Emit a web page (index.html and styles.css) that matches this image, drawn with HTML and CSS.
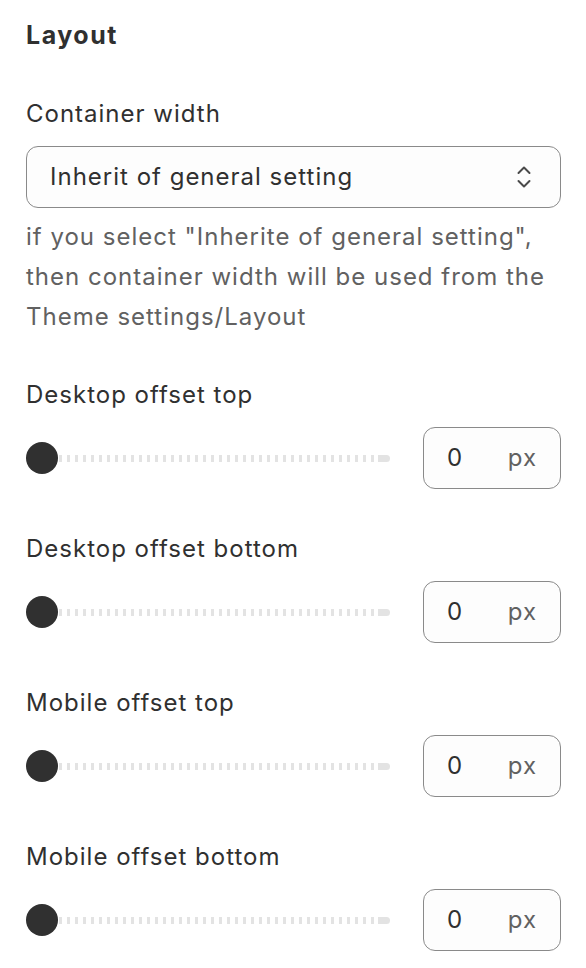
FILE: index.html
```html
<!DOCTYPE html>
<html lang="en">
<head>
    <meta charset="UTF-8">
    <meta name="viewport" content="width=device-width, initial-scale=1.0">
    <title>Layout</title>
    <link rel="stylesheet" href="styles.css">
</head>
<body>

<div class="panel">
    <h2 class="panelTitle">Layout</h2>

    <div class="field firstField">
        <label class="fieldLabel">Container width</label>
        <div class="select">
            <span>Inherit of general setting</span>
            <svg class="selectArrows" width="20" height="28" viewBox="0 0 20 28">
                <path d="M4.5 10 L10 4.5 L15.5 10" />
                <path d="M4.5 18 L10 23.5 L15.5 18" />
            </svg>
        </div>
        <p class="helpText">if you select "Inherite of general setting", then container width will be used from the Theme settings/Layout</p>
    </div>

    <div class="field afterHelp">
        <label class="fieldLabel">Desktop offset top</label>
        <div class="rangeRow">
            <div class="range">
                <span class="thumb"></span>
                <span class="track"></span>
                <span class="trackEnd"></span>
            </div>
            <div class="numberBox"><span>0</span><span class="unit">px</span></div>
        </div>
    </div>

    <div class="field">
        <label class="fieldLabel">Desktop offset bottom</label>
        <div class="rangeRow">
            <div class="range">
                <span class="thumb"></span>
                <span class="track"></span>
                <span class="trackEnd"></span>
            </div>
            <div class="numberBox"><span>0</span><span class="unit">px</span></div>
        </div>
    </div>

    <div class="field">
        <label class="fieldLabel">Mobile offset top</label>
        <div class="rangeRow">
            <div class="range">
                <span class="thumb"></span>
                <span class="track"></span>
                <span class="trackEnd"></span>
            </div>
            <div class="numberBox"><span>0</span><span class="unit">px</span></div>
        </div>
    </div>

    <div class="field">
        <label class="fieldLabel">Mobile offset bottom</label>
        <div class="rangeRow">
            <div class="range">
                <span class="thumb"></span>
                <span class="track"></span>
                <span class="trackEnd"></span>
            </div>
            <div class="numberBox"><span>0</span><span class="unit">px</span></div>
        </div>
    </div>
</div>

</body>
</html>
```

FILE: styles.css
```css
body {
    margin: 0;
    background-color: #fff;
    color: #303030;
    font-family: Inter, "Noto Sans", sans-serif;
    font-size: 24px;
    line-height: 40px;
    letter-spacing: 1px; /* текст в макете шире обычного Inter */
}
.panel {
    padding: 15px 25px 0 26px;
}
.panelTitle {
    margin: 0;
    font-size: 25px;
    font-weight: 700;
    line-height: 40px;
    letter-spacing: 1.5px;
}
.field {
    display: flex;
    flex-direction: column;
    margin-top: 40px;
}
.firstField {
    margin-top: 39px;
}
.afterHelp {
    margin-top: 38px;
}
.fieldLabel {
    display: block;
    margin-bottom: 12px;
}
.select {
    display: flex;
    align-items: center;
    justify-content: space-between;
    height: 62px;
    box-sizing: border-box;
    padding: 0 26px 0 23px;
    border: 1px solid #8a8a8a;
    border-radius: 12px;
    background-color: #fdfdfd;
}
.selectArrows path {
    fill: none;
    stroke: #4a4a4a; /* стрелки селекта */
    stroke-width: 2;
    stroke-linecap: round;
    stroke-linejoin: round;
}
.helpText {
    margin: 9px 0 0;
    color: #616161;
}
.rangeRow {
    display: flex;
    align-items: center;
    justify-content: space-between;
}
.range {
    display: flex;
    align-items: center;
    width: 364px;
    height: 62px;
}
.thumb {
    flex: none;
    width: 32px;
    height: 32px;
    border-radius: 50%;
    background-color: #303030;
}
.track {
    flex: 1;
    height: 7px;
    margin-left: 1px;
    background: repeating-linear-gradient(90deg, #e3e3e3 0 3.3px, transparent 3.3px 8px);
}
.trackEnd {
    flex: none;
    width: 12px;
    height: 7px;
    margin-left: 1px;
    border-radius: 0 4px 4px 0;
    background-color: #e3e3e3;
}
.numberBox {
    display: flex;
    align-items: center;
    justify-content: space-between;
    width: 138px;
    height: 62px;
    box-sizing: border-box;
    padding: 0 23px 0 23px;
    border: 1px solid #8a8a8a;
    border-radius: 12px;
    background-color: #fdfdfd;
}
.unit {
    color: #616161;
}
```
